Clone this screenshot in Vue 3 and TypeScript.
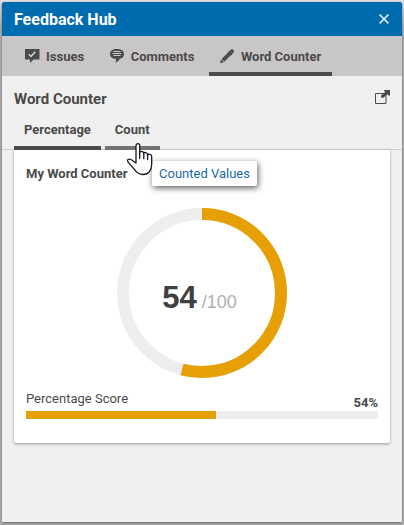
<script setup lang="ts">
import { computed, ref } from 'vue'

type IconName = 'check' | 'comment' | 'pencil'
interface Tab { label: string; icon: IconName }

const tabs: Tab[] = [
  { label: 'Issues', icon: 'check' },
  { label: 'Comments', icon: 'comment' },
  { label: 'Word Counter', icon: 'pencil' },
]
const activeTab = ref('Word Counter')
const views: string[] = ['Percentage', 'Count']
const activeView = ref('Percentage')
const score = ref(54)
const circumference = 2 * Math.PI * 79
const dash = computed(() => `${(circumference * score.value) / 100} ${circumference}`)
</script>

<template>
  <div class="backdrop">
    <section class="panel">
      <header class="titlebar">
        <h1>Feedback Hub</h1>
        <button class="close" aria-label="Close">
          <svg width="10" height="10" viewBox="0 0 10 10"><path d="M.6.6 9.4 9.4M9.4.6.6 9.4" /></svg>
        </button>
      </header>

      <nav class="tabs">
        <button
          v-for="tab in tabs"
          :key="tab.label"
          class="tab"
          :class="{ active: tab.label === activeTab }"
          @click="activeTab = tab.label"
        >
          <svg width="16" height="16" viewBox="0 0 16 16">
            <template v-if="tab.icon === 'check'">
              <path class="solid" d="M1 1h14.500v10.500H9.500L6 15v-3.500H1z" />
              <path class="mark" d="m4.800 6.200 2.200 2.200 4.300-4.700" />
            </template>
            <template v-else-if="tab.icon === 'comment'">
              <path class="solid" d="M8 1c4.500 0 7 2 7 5 0 2.600-1.500 4.300-4.200 4.800C10 13 8.300 14.300 6.300 14.500c.7-1.100.9-2.300.5-3.500C3 10.800 1 9 1 6c0-3 2.500-5 7-5z" />
              <path class="lines" d="M4.500 3.500h7M3.500 5.500h9M4.500 7.500h7" />
            </template>
            <template v-else>
              <path class="solid" d="M12.300 1.400c.4-.4.900-.4 1.300 0l1.300 1.300c.4.4.4.9 0 1.300l-1.500 1.500-2.600-2.600zM10.300 3.300l2.700 2.700-7.700 7.700-2.700-2.700zM2.100 11.500l2.700 2.700L1 15.200z" />
              <path class="solid" d="M9 4.200l3.200 3.200 1.600-1.600-3.200-3.200z" />
            </template>
          </svg>
          <span>{{ tab.label }}</span>
        </button>
      </nav>

      <div class="heading">
        <h2>Word Counter</h2>
        <svg class="popout" width="16" height="16" viewBox="0 0 16 16">
          <path class="frame" d="M.5 5.500h10.500v10H.5z" />
          <path class="arrow" d="M9 2h6v5.500h-1.500L12.300 6.300 8.500 9.800 6 9.500V7.500L10.200 4 9 2.800z" />
        </svg>
      </div>

      <nav class="views">
        <button
          v-for="view in views"
          :key="view"
          class="view"
          :class="{ active: view === activeView }"
          @click="activeView = view"
        >{{ view }}</button>
      </nav>

      <article class="card">
        <h3>My Word Counter</h3>
        <div class="gauge">
          <svg width="170" height="170" viewBox="0 0 170 170">
            <circle class="ring" cx="85" cy="85" r="79" />
            <circle class="ring value" cx="85" cy="85" r="79" :stroke-dasharray="dash" transform="rotate(-90 85 85)" />
          </svg>
          <div class="reading"><strong>{{ score }}</strong><span>/100</span></div>
        </div>
        <div class="legend"><span>Percentage Score</span><b>{{ score }}%</b></div>
        <div class="track"><div class="fill" :style="{ width: score + '%' }"></div></div>
      </article>

      <div class="tooltip">Counted Values</div>
      <svg class="pointer" width="26" height="34" viewBox="0 0 26 34">
        <path d="M9 20V2.700C9 0 12.700 0 12.700 2.700V9.500C13.200 7.900 16.400 8 16.800 10.300C17.500 8.900 20.300 9.200 20.600 11.700C21.500 10.700 24.700 11 24.700 13.500V21.500C24.700 27 21.500 31.500 16 31.500C11.500 31.500 9 29 6.700 25.700L1.300 19.300C-.5 17 1.500 15.300 4 16.500L9 20" />
        <path d="M12.700 9V15.500M16.800 10V15.800M20.600 11.500V16.500" />
      </svg>
    </section>
  </div>
</template>

<style>
body { margin: 0; background: #b2b2b2; }
</style>

<style scoped>
* { box-sizing: border-box; }
.backdrop {
  height: 525px;
  padding: 2px 2px 3px;
  overflow: hidden;
  background: linear-gradient(#e2e2e2, #b2b2b2 30px);
  font-family: Roboto, "Liberation Sans", sans-serif;
  font-size: 13px;
  color: #4a4a4a;
}
.panel {
  position: relative;
  height: 520px;
  background: #f0f0f0;
  border-radius: 2px 2px 0 0;
  box-shadow: 0 1px 3px rgba(0, 0, 0, .45);
}
h1, h2, h3 { margin: 0; }
button {
  padding: 0;
  border: 0;
  background: none;
  font: inherit;
  color: inherit;
}
.titlebar {
  display: flex;
  align-items: center;
  justify-content: space-between;
  height: 34px;
  padding: 0 13px 0 12px;
  border-radius: 2px 2px 0 0;
  background: #006cb0;
  color: #fff;
}
h1 { padding-top: 1px; font-size: 16px; line-height: 33px; font-weight: 700; }
.close { display: flex; }
.close path { stroke: #d5e8f5; stroke-width: 1.7; }
.tabs {
  display: flex;
  gap: 4px;
  height: 40px;
  padding-left: 12px;
  background: #c8c6c6;
}
.tab {
  display: flex;
  align-items: center;
  gap: 6px;
  height: 40px;
  padding: 4px 10.5px 0 10px;
  font-weight: 700;
  border-bottom: 4px solid transparent;
  white-space: nowrap;
}
.tab.active { border-color: #4b4b4b; }
.solid { fill: #4a4a4a; }
.mark { fill: none; stroke: #d8d6d6; stroke-width: 1.5; }
.lines { stroke: #c8c6c6; stroke-width: 1; }
.heading {
  display: flex;
  justify-content: space-between;
  align-items: center;
  height: 42px;
  padding: 3px 11px 0 12px;
}
h2 { font-size: 15px; font-weight: 700; }
.popout { margin-top: -5px; }
.frame { fill: none; stroke: #4a4a4a; stroke-width: 1; }
.arrow { fill: #4a4a4a; }
.views {
  display: flex;
  gap: 4px;
  height: 32px;
  padding-left: 12px;
  box-shadow: inset 0 -1px #d0d0d0;
}
.view {
  height: 32px;
  padding: 0 10px 9px;
  font-weight: 700;
  box-shadow: inset 0 -4px #757171;
}
.view.active { box-shadow: inset 0 -4px #4b4b4b; }
.card {
  height: 293px;
  margin: 0 12px;
  padding: 16px 12px 0;
  background: #fff;
  border-radius: 0 0 2px 2px;
  box-shadow: 0 1px 3px rgba(0, 0, 0, .38);
}
h3 { font-size: 13px; line-height: 16px; font-weight: 700; }
.gauge {
  display: grid;
  place-items: center;
  height: 170px;
  margin-top: 26px;
}
.gauge > * { grid-area: 1 / 1; }
.ring { fill: none; stroke: #eee; stroke-width: 12; }
.ring.value { stroke: #e6a006; }
.reading {
  display: flex;
  align-items: baseline;
  gap: 5px;
  margin: 10px 5px 0 0;
  font-family: "Liberation Sans", sans-serif;
  color: #404040;
}
.reading strong { font-size: 31px; }
.reading span { font-size: 18px; color: #b0b0b0; }
.legend {
  display: flex;
  justify-content: space-between;
  height: 33px;
  padding-top: 13px;
  line-height: 16px;
}
.legend b { padding-top: 4px; }
.track { height: 8px; background: #eee; }
.fill { height: 8px; background: #e6a006; }
.tooltip {
  position: absolute;
  left: 150px;
  top: 159px;
  width: 105px;
  height: 25px;
  border-radius: 2px;
  background: #fff;
  color: #1b69ac;
  line-height: 25px;
  text-align: center;
  white-space: nowrap;
  box-shadow: 1px 2px 6px rgba(0, 0, 0, .65);
}
.pointer {
  position: absolute;
  left: 125px;
  top: 141px;
}
.pointer path {
  fill: #fff;
  stroke: #171725;
  stroke-width: 1.3;
  stroke-linecap: round;
  stroke-linejoin: round;
}
</style>
